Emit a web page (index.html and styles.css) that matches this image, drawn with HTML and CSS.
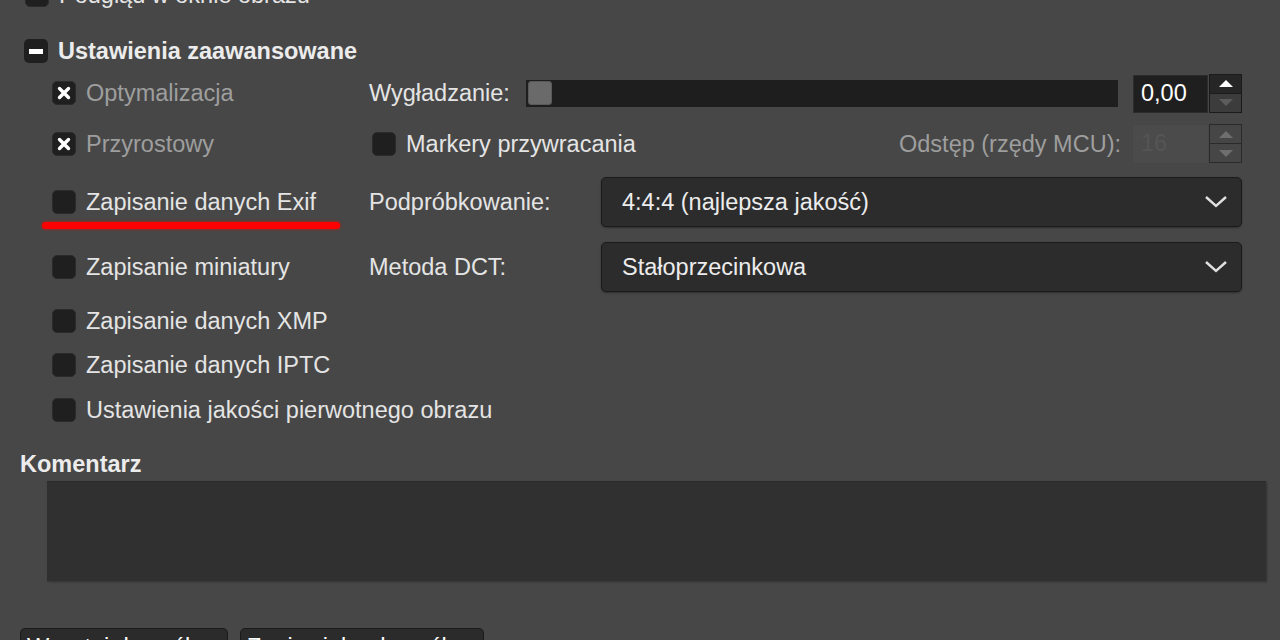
FILE: index.html
```html
<!DOCTYPE html>
<html lang="pl">
<head>
    <meta charset="UTF-8">
    <title>Eksport obrazu jako JPEG</title>
    <link rel="stylesheet" href="styles.css">
</head>
<body>
    <div class="page">
        <div class="check-row top-row">
            <span class="check"></span>
            <span class="text">Podgląd w oknie obrazu</span>
        </div>

        <div class="expander">
            <span class="exp-box"><span class="minus"></span></span>
            <span class="exp-title">Ustawienia zaawansowane</span>
        </div>

        <div class="advanced">
            <!-- row 1 -->
            <div class="check-row dim">
                <span class="check"><svg width="14" height="14" viewBox="0 0 14 14"><path d="M2.5 2.5 L11.5 11.5 M11.5 2.5 L2.5 11.5" stroke="#fff" stroke-width="3.4" stroke-linecap="round"/></svg></span>
                <span class="text">Optymalizacja</span>
            </div>
            <div class="ctrl">
                <span class="label">Wygładzanie:</span>
                <div class="slider"><span class="thumb"></span></div>
                <div class="spin">
                    <span class="spin-value">0,00</span>
                    <div class="spin-btns">
                        <span class="spin-up"></span>
                        <span class="spin-down"></span>
                    </div>
                </div>
            </div>

            <!-- row 2 -->
            <div class="check-row dim">
                <span class="check"><svg width="14" height="14" viewBox="0 0 14 14"><path d="M2.5 2.5 L11.5 11.5 M11.5 2.5 L2.5 11.5" stroke="#fff" stroke-width="3.4" stroke-linecap="round"/></svg></span>
                <span class="text">Przyrostowy</span>
            </div>
            <div class="ctrl">
                <div class="check-row markers">
                    <span class="check"></span>
                    <span class="text">Markery przywracania</span>
                </div>
                <span class="label dim-label">Odstęp (rzędy MCU):</span>
                <div class="spin disabled">
                    <span class="spin-value">16</span>
                    <div class="spin-btns">
                        <span class="spin-up"></span>
                        <span class="spin-down"></span>
                    </div>
                </div>
            </div>

            <!-- row 3 -->
            <div class="check-row marked">
                <span class="check"></span>
                <span class="text">Zapisanie danych Exif</span>
            </div>
            <div class="ctrl">
                <span class="label combo-label">Podpróbkowanie:</span>
                <div class="combo">
                    <span>4:4:4 (najlepsza jakość)</span>
                    <svg width="24" height="14" viewBox="0 0 24 14"><polyline points="2,2 12,11 22,2" fill="none" stroke="#e0e0e0" stroke-width="2.4"/></svg>
                </div>
            </div>

            <!-- row 4 -->
            <div class="check-row">
                <span class="check"></span>
                <span class="text">Zapisanie miniatury</span>
            </div>
            <div class="ctrl">
                <span class="label combo-label">Metoda DCT:</span>
                <div class="combo">
                    <span>Stałoprzecinkowa</span>
                    <svg width="24" height="14" viewBox="0 0 24 14"><polyline points="2,2 12,11 22,2" fill="none" stroke="#e0e0e0" stroke-width="2.4"/></svg>
                </div>
            </div>

            <!-- rows 5-7 -->
            <div class="check-row">
                <span class="check"></span>
                <span class="text">Zapisanie danych XMP</span>
            </div>
            <div></div>
            <div class="check-row">
                <span class="check"></span>
                <span class="text">Zapisanie danych IPTC</span>
            </div>
            <div></div>
            <div class="check-row wide">
                <span class="check"></span>
                <span class="text">Ustawienia jakości pierwotnego obrazu</span>
            </div>
        </div>

        <div class="section-label">Komentarz</div>
        <div class="comment"></div>

        <div class="buttons">
            <button class="btn btn-load">Wczytaj domyślne</button>
            <button class="btn btn-save">Zapisz jako domyślne</button>
        </div>
    </div>
</body>
</html>
```

FILE: styles.css
```css
html, body {
    height: 640px;
    overflow: hidden;
}
body {
    margin: 0;
    background-color: #474747;
    color: #e4e4e4;
    font-family: "Liberation Sans", Arial, sans-serif;
    font-size: 23.5px;
    line-height: 28px;
}
.page {
    padding-left: 20px;
}

/* checkboxes */
.check-row {
    display: flex;
    align-items: center;
    gap: 10px;
    white-space: nowrap;
}
.check {
    width: 24px;
    height: 24px;
    flex: none;
    box-sizing: border-box;
    border-radius: 5px;
    background: #1f1f1f;
    border: 1px solid #2b2b2b;
    display: flex;
    align-items: center;
    justify-content: center;
}
.check-row.dim .text {
    color: #9e9e9e;
}
.top-row {
    margin-top: -17px;
    margin-left: 5px;
    height: 24px;
}

/* expander */
.expander {
    display: flex;
    align-items: center;
    gap: 10px;
    margin-top: 32px;
    margin-left: 4px;
    height: 24px;
}
.exp-box {
    width: 24px;
    height: 24px;
    border-radius: 5px;
    background: #1f1f1f;
    display: flex;
    align-items: center;
    justify-content: center;
}
.minus {
    width: 14px;
    height: 5px;
    background: #ffffff;
}
.exp-title {
    font-weight: bold;
    color: #ececec;
}

/* advanced grid */
.advanced {
    display: grid;
    grid-template-columns: 317px 873px;
    grid-template-rows: 42px 59px 58px 72px 36px 52px 38px;
    margin-top: 9px;
    margin-left: 32px;
    align-items: center;
}
.ctrl {
    display: flex;
    align-items: center;
}
.label {
    white-space: nowrap;
}
.dim-label {
    color: #9e9e9e;
    margin-left: auto;
    margin-right: 12px;
}
.combo-label {
    width: 232px;
    flex: none;
}
.markers {
    margin-left: 3px;
}

/* slider */
.slider {
    flex: 1;
    height: 27px;
    margin: 0 15px 0 16px;
    background: #1e1e1e;
    display: flex;
    align-items: center;
    padding-left: 2px;
}
.thumb {
    width: 24px;
    height: 24px;
    box-sizing: border-box;
    border-radius: 3px;
    background: #6a6a6a;
    border: 1px solid #5a5a5a;
}

/* spin buttons */
.spin {
    display: flex;
    align-items: stretch;
    height: 39px;
}
.spin-value {
    width: 75px;
    box-sizing: border-box;
    padding: 3px 7px 0;
    margin-top: 1px;
    background: #1f1f1f;
    border: 1px solid #2c2c2c;
    color: #ffffff;
}
.spin-btns {
    width: 31px;
    margin-left: 1px;
    display: flex;
    flex-direction: column;
    border: 1px solid #1b1b1b;
    background: #1b1b1b;
    gap: 1px;
}
.spin-up, .spin-down {
    flex: 1;
    display: flex;
    align-items: center;
    justify-content: center;
}
.spin-up {
    background: #262626;
}
.spin-down {
    background: #3c3c3c;
}
.spin-up::before {
    content: "";
    border-left: 7px solid transparent;
    border-right: 7px solid transparent;
    border-bottom: 7px solid #ffffff;
}
.spin-down::before {
    content: "";
    border-left: 7px solid transparent;
    border-right: 7px solid transparent;
    border-top: 7px solid #5c5c5c;
}
.spin.disabled .spin-value {
    background: #4b4b4b;
    border-color: #4b4b4b;
    color: #555555;
}
.spin.disabled .spin-btns {
    border-color: #2a2a2a;
    background: #2a2a2a;
}
.spin.disabled .spin-up, .spin.disabled .spin-down {
    background: #464646;
}
.spin.disabled .spin-up::before {
    border-bottom-color: #6e6e6e;
}
.spin.disabled .spin-down::before {
    border-top-color: #6e6e6e;
}

/* combo boxes */
.combo {
    flex: 1;
    height: 50px;
    box-sizing: border-box;
    display: flex;
    align-items: center;
    justify-content: space-between;
    padding: 0 13px 0 20px;
    background: #2c2c2c;
    border: 1px solid #1b1b1b;
    border-radius: 5px;
    box-shadow: 0 1px 2px rgba(0, 0, 0, 0.35);
    color: #ececec;
}

/* red marker under the Exif option */
.marked {
    position: relative;
}
.marked::after {
    content: "";
    position: absolute;
    left: -10px;
    top: calc(50% + 20px);
    width: 298px;
    height: 7px;
    border-radius: 4px;
    background: #ff0000;
    box-shadow: 0 0 3px rgba(255, 0, 0, 0.8);
}

/* comment */
.section-label {
    font-weight: bold;
    color: #ececec;
    margin-top: 23px;
    height: 24px;
    line-height: 24px;
}
.comment {
    margin: 5px 0 0 27px;
    width: 1219px;
    height: 99px;
    background: #303030;
    border-top: 1px solid #2a2a2a;
    box-shadow: 1px 1px 2px rgba(0, 0, 0, 0.3);
}

/* bottom buttons */
.buttons {
    display: flex;
    align-items: flex-start;
    gap: 12px;
    margin-top: 47px;
}
.btn {
    padding: 4px 6px 14px;
    line-height: 28px;
    text-align: left;
    white-space: nowrap;
    font-family: inherit;
    font-size: 23.5px;
    color: #ffffff;
    background: #2b2b2b;
    border: 1px solid #1b1b1b;
    border-radius: 5px;
}
.btn-load {
    width: 208px;
}
.btn-save {
    width: 244px;
}
```
